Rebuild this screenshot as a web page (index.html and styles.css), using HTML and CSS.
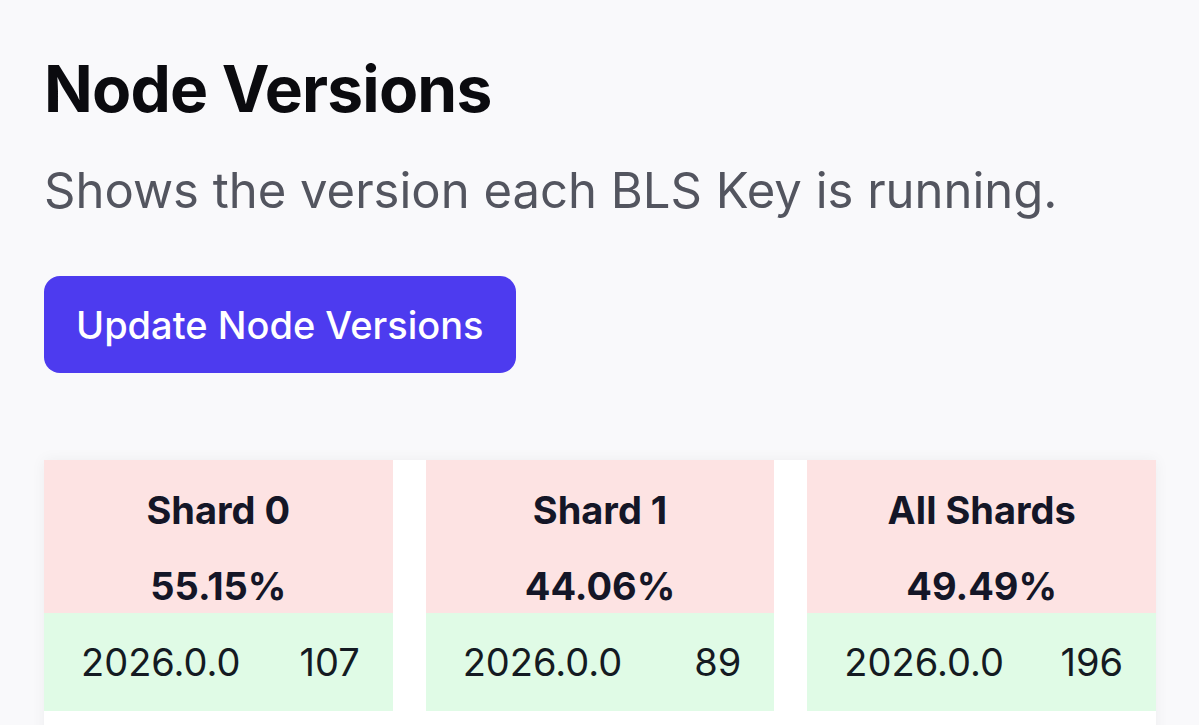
FILE: index.html
```html
<!DOCTYPE html>
<html lang="en">
<head>
<meta charset="utf-8">
<title>Node Versions</title>
<link rel="stylesheet" href="styles.css">
</head>
<body>
<main class="page">
  <h1 class="title">Node Versions</h1>
  <p class="subtitle">Shows the version each BLS Key is running.</p>
  <button class="btn" type="button">Update Node Versions</button>
  <section class="card">
    <div class="shard">
      <div class="shard-head">
        <div class="shard-name">Shard 0</div>
        <div class="shard-pct">55.15%</div>
      </div>
      <div class="shard-row"><span>2026.0.0</span><span>107</span></div>
    </div>
    <div class="shard">
      <div class="shard-head">
        <div class="shard-name">Shard 1</div>
        <div class="shard-pct">44.06%</div>
      </div>
      <div class="shard-row"><span>2026.0.0</span><span>89</span></div>
    </div>
    <div class="shard">
      <div class="shard-head">
        <div class="shard-name">All Shards</div>
        <div class="shard-pct">49.49%</div>
      </div>
      <div class="shard-row"><span>2026.0.0</span><span>196</span></div>
    </div>
  </section>
</main>
</body>
</html>
```
FILE: styles.css
```css
* { box-sizing: border-box; }
html, body {
  margin: 0;
  padding: 0;
  background: #f9f9fb;
  font-family: Inter, "Noto Sans", sans-serif;
  overflow: hidden;
}
.page {
  padding: 50px 43px 0 44px;
  display: flex;
  flex-direction: column;
  align-items: flex-start;
}
.title {
  margin: 0;
  font-size: 64px;
  line-height: 77px;
  font-weight: 700;
  color: #0b0b0f;
  letter-spacing: -0.8px;
}
.subtitle {
  margin: 35px 0 0;
  font-size: 49px;
  line-height: 58px;
  color: #53555f;
  font-weight: 400;
}
.btn {
  margin-top: 56px;
  height: 97px;
  padding: 0 32px;
  border: none;
  border-radius: 16px;
  background: #4d3bef;
  color: #ffffff;
  font-family: inherit;
  font-size: 38px;
  font-weight: 500;
}
.card {
  margin-top: 87px;
  align-self: stretch;
  background: #ffffff;
  display: flex;
  gap: 33px;
  height: 300px;
  box-shadow: 0 0 14px rgba(0,0,0,0.05);
}
.shard {
  flex: 1;
  display: flex;
  flex-direction: column;
}
.shard-head {
  background: #fde3e3;
  height: 153px;
  padding-top: 26px;
  text-align: center;
  color: #141627;
  font-weight: 700;
  font-size: 38px;
}
.shard-name { line-height: 48px; }
.shard-pct { line-height: 48px; margin-top: 28px; }
.shard-row {
  background: #e0fbe6;
  height: 98px;
  display: flex;
  align-items: center;
  justify-content: space-between;
  padding: 0 33px 0 37px;
  font-size: 38px;
  color: #141a22;
}
```
